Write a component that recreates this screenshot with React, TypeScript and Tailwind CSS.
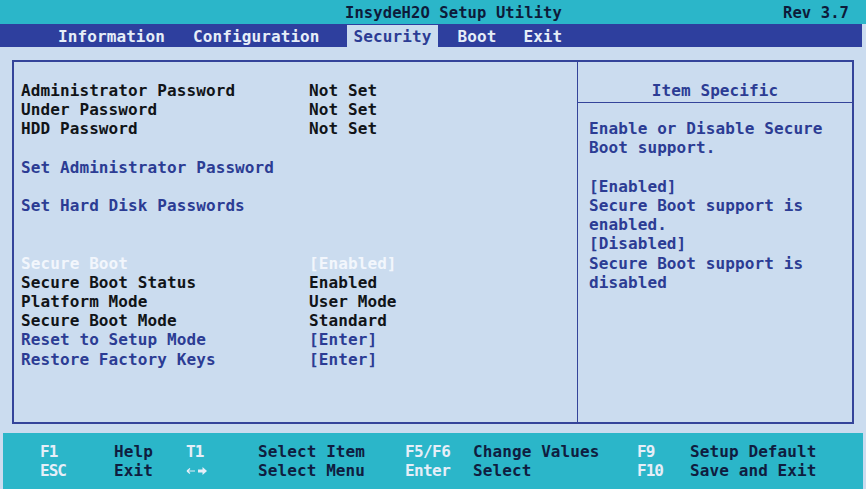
import React from 'react';

const mono = { fontFamily: '"DejaVu Sans Mono", "Liberation Mono", monospace' };

type Row = { label?: string; value?: string; kind?: 'plain' | 'link' | 'active' };

const rows: Row[] = [
    { label: 'Administrator Password', value: 'Not Set' },
    { label: 'Under Password', value: 'Not Set' },
    { label: 'HDD Password', value: 'Not Set' },
    {},
    { label: 'Set Administrator Password', kind: 'link' },
    {},
    { label: 'Set Hard Disk Passwords', kind: 'link' },
    {},
    {},
    { label: 'Secure Boot', value: '[Enabled]', kind: 'active' },
    { label: 'Secure Boot Status', value: 'Enabled' },
    { label: 'Platform Mode', value: 'User Mode' },
    { label: 'Secure Boot Mode', value: 'Standard' },
    { label: 'Reset to Setup Mode', value: '[Enter]', kind: 'link' },
    { label: 'Restore Factory Keys', value: '[Enter]', kind: 'link' },
];

const helpLines = [
    'Enable or Disable Secure',
    'Boot support.',
    '',
    '[Enabled]',
    'Secure Boot support is',
    'enabled.',
    '[Disabled]',
    'Secure Boot support is',
    'disabled',
];

const ArrowsLR = () => (
    <svg width="22" height="10" viewBox="0 0 22 10" className="mt-[5px]">
        <path d="M1 5h8M1 5l3-2.5M1 5l3 2.5" stroke="#e6eef8" strokeWidth="1.2" fill="none" />
        <path d="M12 3.6h4.5V1L21 5l-4.5 4V6.4H12z" fill="#e6eef8" />
    </svg>
);

const App: React.FC = () => {
    const rowColor = (k?: Row['kind']) =>
        k === 'link' ? 'text-[#2c3c94]' : k === 'active' ? 'text-[#f2f6fc]' : 'text-[#111418]';

    return (
        <div
            style={mono}
            className="w-[866px] h-[489px] flex flex-col bg-[#cbdcef] font-bold text-[16px] tracking-[0.1px] overflow-hidden"
        >
            {/* title */}
            <div className="h-[24px] bg-[#2bb6c9] flex items-center text-[#0d1b3a] text-[15.5px] pt-[3px]">
                <span className="ml-[345px]">InsydeH2O Setup Utility</span>
                <span className="ml-auto mr-[17px]">Rev 3.7</span>
            </div>

            {/* menu */}
            <div className="h-[23px] w-[862px] bg-[#2e3f9e] flex items-stretch text-[#e6eef8]">
                <span className="ml-[58px] pt-[2px] flex items-center">Information</span>
                <span className="ml-[28px] pt-[2px] flex items-center">Configuration</span>
                <span className="ml-[27px] mt-[1px] px-[7px] pt-[1px] bg-[#cbdcef] text-[#2c3c94] flex items-center">
                    Security
                </span>
                <span className="ml-[19px] pt-[2px] flex items-center">Boot</span>
                <span className="ml-[27px] pt-[2px] flex items-center">Exit</span>
            </div>

            {/* main */}
            <div className="flex-1 pt-[13px] pl-[12px] pr-[12px] pb-[9px] flex">
                <div className="flex-1 flex border-2 border-[#34449a]">
                    <div className="w-[563px] pl-[7px] pt-[19px] leading-[19.2px]">
                        {rows.map((r, i) => (
                            <div key={i} className={`flex h-[19.2px] ${rowColor(r.kind)}`}>
                                <span className="w-[288px] whitespace-pre">{r.label ?? ''}</span>
                                <span className="whitespace-pre">{r.value ?? ''}</span>
                            </div>
                        ))}
                    </div>
                    <div className="flex-1 border-l border-[#34449a] flex flex-col text-[#2c3c94] leading-[19.2px]">
                        <div className="pt-[19px] pb-[2px] text-center border-b border-[#34449a]">Item Specific</div>
                        <div className="pl-[11px] pt-[16px]">
                            {helpLines.map((l, i) => (
                                <div key={i} className="h-[19.2px] whitespace-pre">{l}</div>
                            ))}
                        </div>
                    </div>
                </div>
            </div>

            {/* footer */}
            <div className="h-[56px] mx-[3px] bg-[#2bb6c9] pt-[9px] leading-[19.2px] text-[#0f1d40] whitespace-nowrap">
                <div className="flex">
                    <span className="w-[74px] ml-[37px] text-[#e6eef8] tracking-[-1px]">F1</span>
                    <span className="w-[72px]">Help</span>
                    <span className="w-[72px] text-[#e6eef8] tracking-[-1px]">T1</span>
                    <span className="w-[147px]">Select Item</span>
                    <span className="w-[68px] text-[#e6eef8] tracking-[-0.6px]">F5/F6</span>
                    <span className="w-[164px]">Change Values</span>
                    <span className="w-[53px] text-[#e6eef8] tracking-[-1px]">F9</span>
                    <span>Setup Default</span>
                </div>
                <div className="flex">
                    <span className="w-[74px] ml-[37px] text-[#e6eef8] tracking-[-1px]">ESC</span>
                    <span className="w-[72px]">Exit</span>
                    <span className="w-[72px] flex">
                        <ArrowsLR />
                    </span>
                    <span className="w-[147px]">Select Menu</span>
                    <span className="w-[68px] text-[#e6eef8] tracking-[-0.6px]">Enter</span>
                    <span className="w-[164px]">Select</span>
                    <span className="w-[53px] text-[#e6eef8] tracking-[-1px]">F10</span>
                    <span>Save and Exit</span>
                </div>
            </div>
        </div>
    );
};

export default App;
